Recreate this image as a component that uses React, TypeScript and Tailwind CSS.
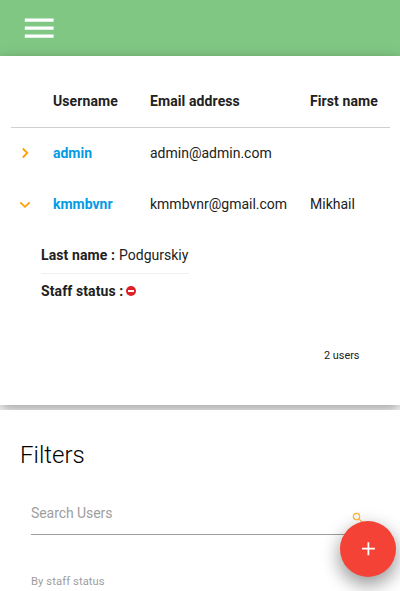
import React from "react";
import { MdMenu, MdSearch } from "react-icons/md";

type User = { username: string; email: string; firstName: string; open: boolean };

const users: User[] = [
  { username: "admin", email: "admin@admin.com", firstName: "", open: false },
  { username: "kmmbvnr", email: "kmmbvnr@gmail.com", firstName: "Mikhail", open: true },
];

function Chevron({ open }: { open: boolean }) {
  return (
    <svg viewBox="0 0 20 20" className="h-5 w-5" fill="none" stroke="#ffa000" strokeWidth="1.8">
      <path d={open ? "M5.3 8.3 10 12.8l4.7-4.5" : "M7.8 5.5 12.3 10l-4.5 4.5"} />
    </svg>
  );
}

function UserTable() {
  return (
    <div className="ml-[11px] w-[379px] pt-[19px]">
      <div className="grid h-[53px] grid-cols-[42px_97px_160px_80px] items-center border-b border-[#d0d0d0] font-bold tracking-[0.1px]">
        <span />
        <span>Username</span>
        <span>Email address</span>
        <span>First name</span>
      </div>
      {users.map((u) => (
        <div key={u.username} className="grid h-[51px] grid-cols-[42px_97px_160px_80px] items-center pb-[2px]">
          <span className="pl-[4px]">
            <Chevron open={u.open} />
          </span>
          <a className="font-bold text-[#039be5]">{u.username}</a>
          <span>{u.email}</span>
          <span>{u.firstName}</span>
        </div>
      ))}
      <div className="ml-[30px] flex w-[148px] flex-col whitespace-nowrap">
        <div className="mt-[14px] h-[30px] border-b border-[#efefef] leading-[22px]">
          <b className="mr-[0.5px] tracking-[0.1px]">Last name :</b> Podgurskiy
        </div>
        <div className="mt-[6px] flex h-[22px] items-center">
          <b className="tracking-[0.1px]">Staff status :</b>
          <svg viewBox="0 0 10 10" className="ml-[3px] h-[10px] w-[10px]">
            <circle cx="5" cy="5" r="5" fill="#dd1f26" />
            <rect x="2" y="4" width="6" height="2" fill="#fff" />
          </svg>
        </div>
      </div>
    </div>
  );
}

export default function App() {
  return (
    <div className="h-[591px] w-[400px] overflow-hidden bg-white font-[Roboto,sans-serif] text-[14px] leading-[22px] text-[#212121]">
      <header className="flex h-[56px] bg-[#81c784] pl-[20px] pt-[9px] text-white">
        <MdMenu size={38.4} />
      </header>
      <main className="relative mb-[5px] h-[349px] bg-white shadow-[0_5px_11px_0_rgba(0,0,0,0.22),0_4px_15px_0_rgba(0,0,0,0.18)]">
        <UserTable />
        <div className="mr-[40.5px] mt-[43px] text-right text-[10.9px] leading-[22px]">2 users</div>
      </main>
      <aside className="relative h-[181px] bg-white pl-[20px] pt-[28px]">
        <h5 className="text-[24px] font-light leading-[34px] text-black">Filters</h5>
        <div className="ml-[11px] mt-[20px] flex h-[43px] w-[338px] justify-between border-b border-[#9e9e9e] pt-[10px] text-[#9e9e9e]">
          <span className="tracking-[-0.06px]">Search Users</span>
          <MdSearch size={14} className="mr-[4px] mt-[9px] text-[#ffa000]/80" />
        </div>
        <div className="ml-[11px] mt-[36px] text-[11.2px] leading-[22px] tracking-[0.1px] text-[#9e9e9e]">By staff status</div>
      </aside>
      <button className="absolute left-[340px] top-[521px] flex h-[56px] w-[56px] items-center justify-center rounded-full bg-[#f44336] text-white shadow-[0_8px_17px_0_rgba(0,0,0,0.25),0_6px_20px_0_rgba(0,0,0,0.22)]">
        <svg viewBox="0 0 14 14" className="h-[14px] w-[14px]" stroke="white" strokeWidth="1.8">
          <path d="M7.4 .3v12.9M1 6.6h12.9" />
        </svg>
      </button>
    </div>
  );
}
